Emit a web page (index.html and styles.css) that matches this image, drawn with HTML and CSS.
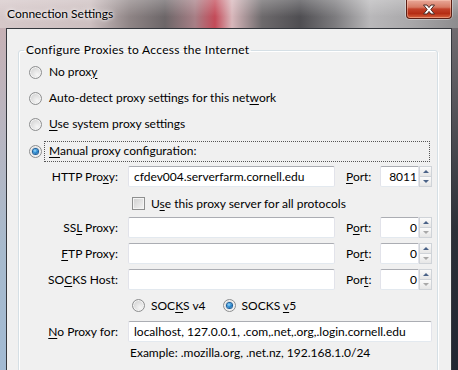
FILE: index.html
```html
<!DOCTYPE html>
<html lang="en">
<head>
    <meta charset="UTF-8">
    <title>Connection Settings</title>
    <link rel="stylesheet" href="styles.css">
</head>
<body>
    <div class="window">
        <div class="titlebar">
            <span class="title">Connection Settings</span>
            <span class="close">
                <svg width="14" height="11" viewBox="0 0 14 11">
                    <path d="M1.5 1 H5 L7 3.6 L9 1 H12.5 L8.8 5.5 L12.5 10 H9 L7 7.4 L5 10 H1.5 L5.2 5.5 Z" fill="#fff" stroke="#4a2a24" stroke-width="1" stroke-linejoin="round"/>
                </svg>
            </span>
        </div>
        <div class="frame">
            <div class="client">
                <fieldset class="group">
                    <legend>Configure Proxies to Access the Internet</legend>

                    <div class="choice">
                        <span class="radio"></span>
                        <span class="choice-label">No prox<u>y</u></span>
                    </div>
                    <div class="choice">
                        <span class="radio"></span>
                        <span class="choice-label">Auto-detect proxy settings for this net<u>w</u>ork</span>
                    </div>
                    <div class="choice tall">
                        <span class="radio"></span>
                        <span class="choice-label"><u>U</u>se system proxy settings</span>
                    </div>
                    <div class="choice">
                        <span class="radio checked"></span>
                        <span class="choice-label focused"><u>M</u>anual proxy configuration:</span>
                    </div>

                    <div class="proxy-grid">
                        <label class="field-label">HTTP Pro<u>x</u>y:</label>
                        <div class="textbox">cfdev004.serverfarm.cornell.edu</div>
                        <label class="port-label"><u>P</u>ort:</label>
                        <div class="port">
                            <div class="port-value">8011</div>
                            <div class="spin">
                                <span class="spin-btn"><i class="arrow-up"></i></span>
                                <span class="spin-btn"><i class="arrow-down"></i></span>
                            </div>
                        </div>

                        <div class="check-row">
                            <span class="checkbox"></span>
                            <span>U<u>s</u>e this proxy server for all protocols</span>
                        </div>

                        <label class="field-label">SS<u>L</u> Proxy:</label>
                        <div class="textbox"></div>
                        <label class="port-label">P<u>o</u>rt:</label>
                        <div class="port">
                            <div class="port-value">0</div>
                            <div class="spin">
                                <span class="spin-btn"><i class="arrow-up"></i></span>
                                <span class="spin-btn"><i class="arrow-down off"></i></span>
                            </div>
                        </div>

                        <label class="field-label"><u>F</u>TP Proxy:</label>
                        <div class="textbox"></div>
                        <label class="port-label">Po<u>r</u>t:</label>
                        <div class="port">
                            <div class="port-value">0</div>
                            <div class="spin">
                                <span class="spin-btn"><i class="arrow-up"></i></span>
                                <span class="spin-btn"><i class="arrow-down off"></i></span>
                            </div>
                        </div>

                        <label class="field-label">SO<u>C</u>KS Host:</label>
                        <div class="textbox"></div>
                        <label class="port-label">Por<u>t</u>:</label>
                        <div class="port">
                            <div class="port-value">0</div>
                            <div class="spin">
                                <span class="spin-btn"><i class="arrow-up"></i></span>
                                <span class="spin-btn"><i class="arrow-down off"></i></span>
                            </div>
                        </div>

                        <div class="socks-row">
                            <span class="radio"></span>
                            <span class="socks-text">SOC<u>K</u>S v4</span>
                            <span class="radio checked"></span>
                            <span class="socks-text">SOCKS <u>v</u>5</span>
                        </div>

                        <label class="field-label"><u>N</u>o Proxy for:</label>
                        <div class="textbox wide">localhost, 127.0.0.1, .com,.net,.org,.login.cornell.edu</div>

                        <div class="example">Example: .mozilla.org, .net.nz, 192.168.1.0/24</div>
                    </div>
                </fieldset>
            </div>
        </div>
    </div>
</body>
</html>
```

FILE: styles.css
```css
body {
    margin: 0;
    font-family: Lato, "Open Sans", sans-serif;
    font-size: 12px;
    color: #000;
}
u {
    text-decoration-thickness: 1px;
    text-underline-offset: 2px;
}
.window {
    width: 458px;
    height: 370px;
    overflow: hidden;
    background: linear-gradient(to right, #d6c8c9 0, #cdbfc0 90px, #8e8485 130px, #6c6668 165px, #a77f86 195px, #c34a58 215px, #d8b7bb 232px, #6d6a6c 262px, #4f4e52 300px, #7c7b7e 335px, #b9b8ba 370px, #a9a8aa 410px, #8d8c8e 458px);
}
.titlebar {
    height: 28px;
    display: flex;
    justify-content: space-between;
    align-items: flex-start;
    background: linear-gradient(to bottom, rgba(255,255,255,0.25), rgba(255,255,255,0) 60%);
}
.title {
    margin: 6px 0 0 7px;
    line-height: 16px;
    text-shadow: 0 0 6px #fff, 0 0 3px #fff;
}
.close {
    width: 44px;
    height: 18px;
    margin-right: 6px;
    border: 1px solid #5a1e14;
    border-top: none;
    border-radius: 0 0 4px 4px;
    background: linear-gradient(to bottom, #e9a899 0, #d77a64 40%, #c2412a 50%, #b52d14 75%, #d8643f 100%);
    box-shadow: inset 0 0 0 1px rgba(255,210,190,0.45), 0 0 0 1px rgba(255,255,255,0.35);
    display: flex;
    align-items: center;
    justify-content: center;
}
.frame {
    padding: 0 6px;
    background:
        linear-gradient(to bottom, #c6b1b5, #a7bacd 55%, #9fbad6) left top / 6px 100% no-repeat,
        linear-gradient(to bottom, #706c70, #2c3038 50%, #1d2230) right top / 6px 100% no-repeat;
}
.client {
    height: 400px;
    border: 1px solid #34373d;
    background: #f0f0f0;
    overflow: hidden;
}
.group {
    margin: 13px 13px 0 11px;
    padding: 1px 4px 0 10px;
    min-width: 0;
    height: 380px;
    border: 1px solid #d5dfe5;
    border-radius: 3px;
    box-shadow: inset 1px 1px 0 #fff, 1px 1px 0 #fff;
}
.group legend {
    margin-left: -5px;
    padding: 0 2px;
    line-height: 16px;
    letter-spacing: 0.3px;
}
.choice {
    height: 26px;
    display: flex;
    align-items: center;
}
.choice.tall {
    height: 27px;
}
.radio {
    flex: none;
    width: 13px;
    height: 13px;
    box-sizing: border-box;
    border-radius: 50%;
    border: 1px solid #8d8e8f;
    background: radial-gradient(circle at 65% 70%, #f6f6f6 0, #e2e2e2 45%, #c9c9c9 100%);
    box-shadow: inset 0 0 0 1px #f4f4f4;
    display: flex;
    align-items: center;
    justify-content: center;
}
.radio.checked::after {
    content: "";
    width: 5px;
    height: 5px;
    border-radius: 50%;
    background: radial-gradient(circle at 40% 35%, #9fdcfb 0, #2e8fd6 45%, #0d4c8a 100%);
    box-shadow: 0 0 0 1px #1b5f9c;
}
.choice-label {
    margin-left: 2px;
    padding: 1px 4px 2px;
    line-height: 16px;
    border: 1px dotted transparent;
}
.choice-label.focused {
    flex: 1;
    margin-right: 3px;
    border-color: #555;
}
.proxy-grid {
    margin-top: 2px;
    display: grid;
    grid-template-columns: 99px 207px 45px 52px;
    grid-template-rows: 21px 20px 21px 21px 21px 21px 21px 16px;
    row-gap: 5px;
}
.field-label {
    padding-right: 10px;
    text-align: right;
    line-height: 21px;
}
.port-label {
    padding-left: 11px;
    line-height: 21px;
}
.textbox {
    box-sizing: border-box;
    height: 21px;
    padding-left: 5px;
    line-height: 19px;
    background: #fff;
    border: 1px solid #e2e3ea;
    border-top-color: #abadb3;
    border-bottom-color: #e3e9ef;
    border-radius: 2px;
    white-space: nowrap;
    overflow: hidden;
}
.textbox.wide {
    grid-column: 2 / 5;
}
.port {
    display: flex;
    height: 21px;
}
.port-value {
    box-sizing: border-box;
    width: 39px;
    padding-right: 1px;
    text-align: right;
    line-height: 19px;
    background: #fff;
    border: 1px solid #e2e3ea;
    border-top-color: #abadb3;
    border-bottom-color: #e3e9ef;
    border-radius: 2px 0 0 2px;
}
.spin {
    width: 13px;
    display: flex;
    flex-direction: column;
}
.spin-btn {
    flex: 1;
    box-sizing: border-box;
    border: 1px solid #cfd3d8;
    background: linear-gradient(to bottom, #fbfbfb, #e6e6e6);
    display: flex;
    align-items: center;
    justify-content: center;
}
.spin-btn + .spin-btn {
    border-top: none;
}
.arrow-up {
    width: 0;
    height: 0;
    border-left: 3px solid transparent;
    border-right: 3px solid transparent;
    border-bottom: 3px solid #4a6287;
}
.arrow-down {
    width: 0;
    height: 0;
    border-left: 3px solid transparent;
    border-right: 3px solid transparent;
    border-top: 3px solid #4a6287;
}
.arrow-down.off {
    border-top-color: #a8a8a8;
}
.check-row {
    grid-column: 2 / 5;
    padding: 2px 0 0 4px;
    display: flex;
    align-items: center;
}
.checkbox {
    flex: none;
    width: 13px;
    height: 13px;
    margin-right: 6px;
    box-sizing: border-box;
    border: 1px solid #8e8f8f;
    background: linear-gradient(135deg, #cfcfcf, #f4f4f4);
    box-shadow: inset 0 0 0 1px #f4f4f4;
}
.socks-row {
    grid-column: 2 / 5;
    padding-left: 4px;
    display: flex;
    align-items: center;
}
.socks-text {
    margin: 0 17px 0 6px;
}
.example {
    grid-column: 2 / 5;
    margin-top: -2px;
    padding-left: 2px;
    line-height: 16px;
}
```
